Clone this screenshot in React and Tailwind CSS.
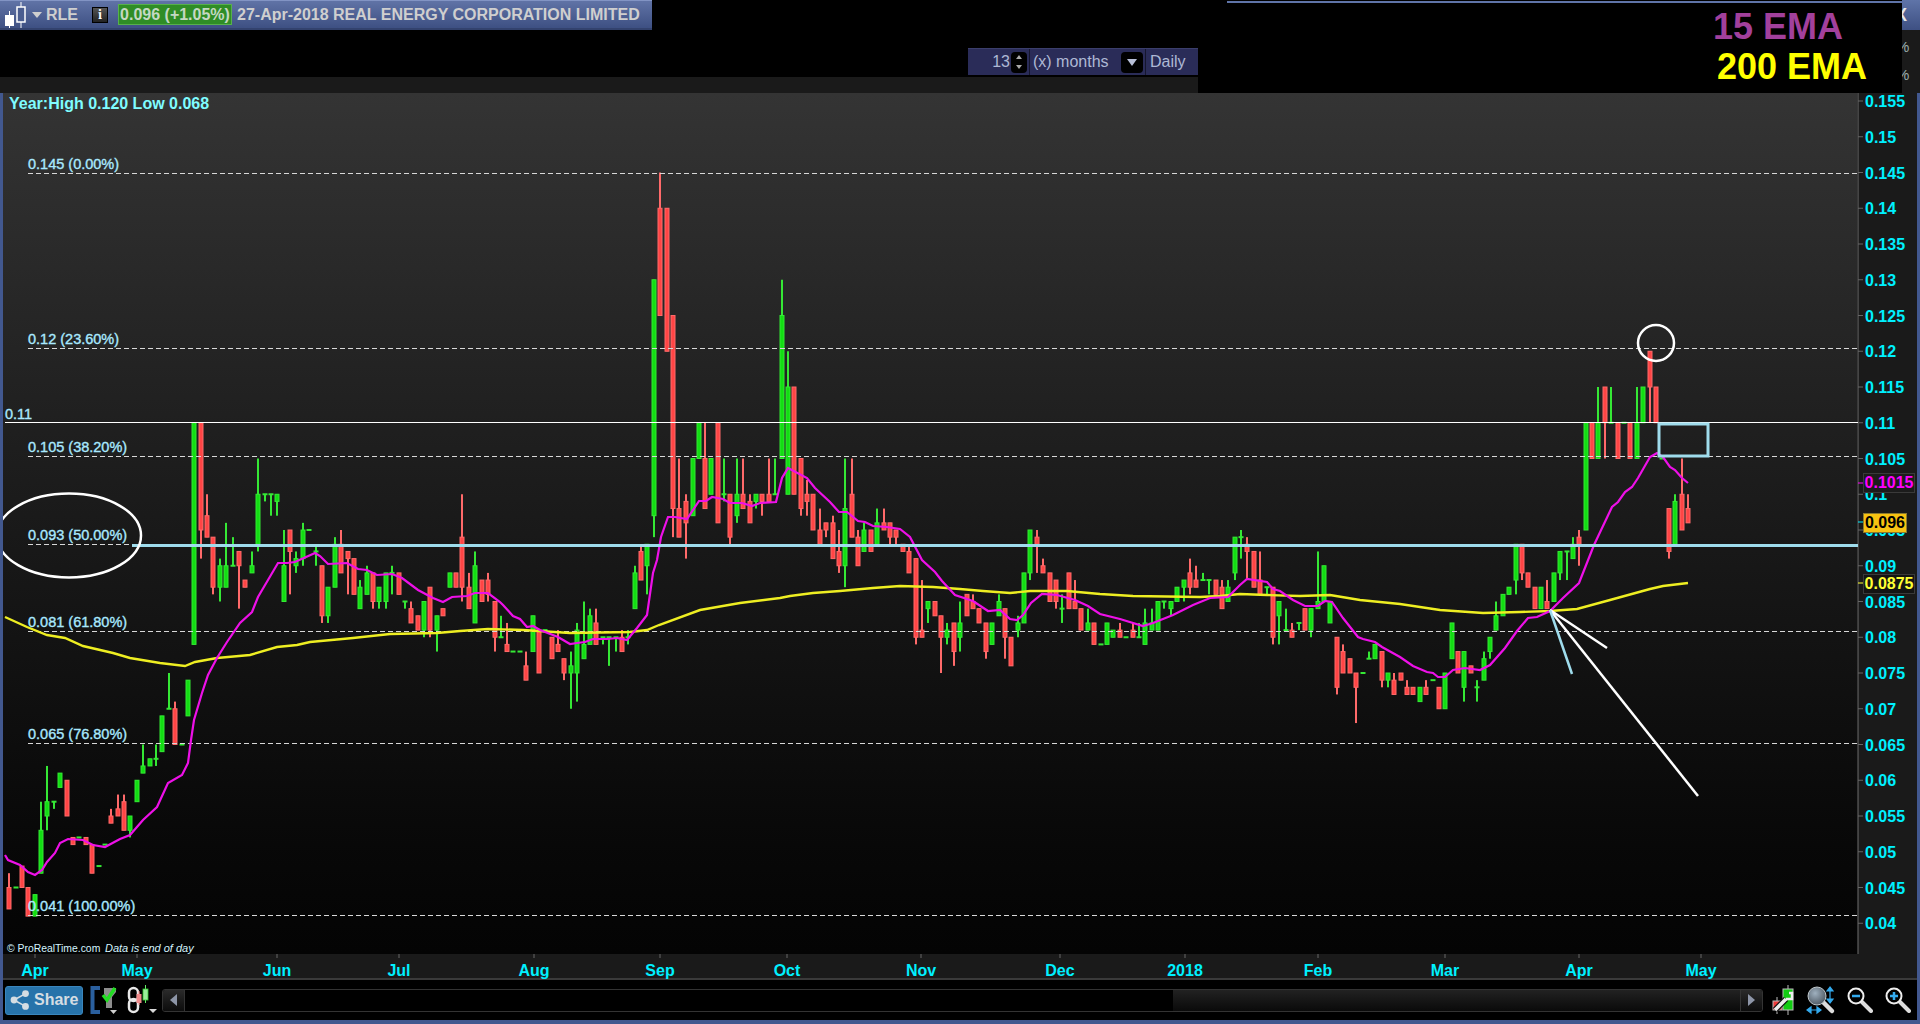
import React from 'react';

// y on the page for a price given in thousandths
const py = (t) => 101 + (155 - t) * 7.15;

// [x, colour, high, bodyTop, bodyBottom, low]
const CANDLES = [
  [9,'r',47,45,42,42],[16,'g',45,45,45,45],[22,'r',48,48,45,45],[28,'r',45,45,41,41],[35,'g',44,44,41,41],
  [41,'g',57,53,47,47],[47,'g',62,57,55,53],[54,'g',57,57,57,56],[60,'g',61,61,59,59],[67,'r',60,60,55,55],
  [73,'r',52,52,51,51],[79,'g',52,52,52,52],[86,'r',52,52,51,51],[92,'r',51,51,47,47],[99,'g',48,48,48,48],
  [105,'g',51,51,51,51],[111,'r',56,55,54,54],[118,'r',58,56,55,55],[124,'r',58,57,53,53],[130,'g',55,55,53,52],
  [137,'g',60,60,57,57],[143,'g',65,62,61,61],[150,'g',63,63,62,62],[156,'g',65,63,63,62],[162,'g',69,69,64,64],
  [169,'g',75,70,70,70],[175,'r',71,70,65,65],[182,'g',65,65,65,65],[188,'g',74,74,69,69],[194,'g',110,110,79,79],
  [201,'r',110,110,95,91],[207,'r',100,97,94,94],[213,'r',94,94,87,86],[220,'g',91,90,87,85],[226,'g',96,90,87,87],
  [233,'g',94,90,90,90],[239,'r',92,92,90,84],[245,'r',88,88,87,87],[252,'g',92,90,89,89],[258,'g',105,100,93,92],
  [265,'g',100,100,100,99],[271,'g',100,100,100,97],[277,'g',100,100,99,97],[284,'g',95,90,85,85],[290,'r',95,95,92,86],
  [296,'g',92,91,90,89],[303,'g',96,95,91,90],[309,'g',95,95,95,95],[316,'g',93,92,92,90],[322,'r',90,90,83,82],
  [328,'g',87,87,83,82],[335,'g',94,93,87,87],[341,'r',95,93,89,89],[348,'r',92,92,91,86],[354,'r',91,91,86,86],
  [360,'g',88,87,84,84],[367,'g',90,89,86,86],[373,'r',89,89,85,84],[379,'g',87,87,85,84],[386,'g',89,89,85,84],
  [392,'g',90,89,89,86],[399,'r',89,89,86,86],[405,'g',85,85,85,84],[411,'r',85,84,82,82],[418,'r',83,83,81,81],
  [424,'g',85,85,81,80],[430,'r',87,87,81,80],[437,'g',83,83,81,78],[443,'r',84,84,83,83],[450,'g',89,89,87,87],
  [456,'r',89,89,87,87],[462,'r',100,94,87,85],[469,'r',89,87,84,84],[475,'g',92,90,82,82],[482,'r',88,88,85,85],
  [488,'r',89,88,86,85],[495,'r',85,85,80,78],[501,'g',83,80,80,80],[507,'r',82,79,78,78],[513,'g',78,78,78,78],
  [520,'g',78,78,78,78],[526,'r',78,76,74,74],[533,'g',83,83,78,78],[539,'r',81,81,75,75],[545,'g',81,81,81,81],
  [552,'r',80,80,77,77],[558,'r',81,79,78,78],[564,'r',77,77,75,74],[571,'g',78,76,75,70],[577,'g',82,81,75,71],
  [584,'g',85,79,77,77],[590,'g',84,83,79,79],[596,'r',84,82,79,79],[603,'g',80,80,80,79],[609,'g',80,80,80,76],
  [616,'g',80,80,80,78],[622,'r',81,80,78,78],[628,'g',81,80,80,79],[635,'g',90,89,84,84],[641,'r',93,92,88,88],
  [647,'g',93,93,90,86],[654,'g',130,130,97,94],[660,'r',145,140,125,125],[667,'r',140,140,120,120],[673,'r',125,125,98,94],
  [679,'r',105,98,94,94],[686,'r',100,99,96,91],[693,'g',105,105,97,97],[699,'g',110,110,105,105],[705,'r',110,105,98,98],
  [711,'g',105,105,100,100],[718,'r',110,110,96,96],[724,'g',105,100,100,99],[730,'r',100,100,94,93],[737,'g',105,100,97,96],
  [743,'r',105,100,98,98],[750,'r',100,99,96,96],[756,'g',100,100,99,98],[762,'r',100,100,99,97],[769,'r',105,100,99,99],
  [775,'g',105,100,100,100],[782,'g',130,125,105,105],[788,'g',120,115,100,100],[794,'r',115,115,100,100],[801,'r',105,105,98,97],
  [807,'r',102,100,99,97],[813,'r',100,100,95,95],[820,'r',98,95,93,93],[826,'r',96,96,95,94],[833,'r',97,96,91,91],
  [839,'r',95,92,90,89],[845,'g',105,98,90,87],[852,'r',105,100,94,94],[858,'r',95,94,90,90],[864,'g',96,95,92,92],
  [871,'r',95,95,92,92],[877,'g',98,96,93,93],[884,'r',98,96,95,95],[890,'r',96,96,94,93],[896,'r',95,95,94,93],
  [903,'r',93,93,92,92],[909,'r',93,92,89,89],[916,'r',91,91,80,79],[922,'r',88,81,80,80],[928,'g',85,85,84,82],
  [935,'r',85,85,83,83],[941,'r',83,83,80,75],[947,'g',82,81,80,79],[954,'r',82,82,78,76],[960,'g',85,82,80,78],
  [967,'r',86,86,83,83],[973,'r',86,85,84,84],[979,'r',84,84,82,82],[986,'r',82,82,78,77],[992,'g',82,82,79,79],
  [999,'g',86,85,83,83],[1005,'r',84,84,80,77],[1011,'r',80,80,76,76],[1018,'g',83,82,81,80],[1024,'g',89,89,82,82],
  [1030,'g',95,95,89,88],[1037,'r',95,94,93,89],[1043,'r',91,90,89,89],[1050,'r',89,89,85,85],[1056,'r',88,88,85,84],
  [1062,'g',86,84,84,82],[1069,'r',89,89,84,84],[1075,'r',88,85,84,84],[1081,'r',84,84,81,81],[1088,'g',84,82,81,81],
  [1094,'r',82,82,79,79],[1101,'g',79,79,79,79],[1107,'g',82,82,79,79],[1113,'g',81,81,80,80],[1120,'r',82,81,80,80],
  [1126,'g',80,80,80,80],[1133,'r',82,81,80,80],[1139,'g',82,80,80,80],[1145,'g',84,82,79,79],[1152,'g',84,82,81,81],
  [1158,'g',85,85,81,81],[1164,'g',85,85,85,84],[1171,'g',85,85,84,83],[1177,'g',87,87,85,85],[1184,'g',88,88,87,85],
  [1190,'r',91,89,87,86],[1196,'r',90,88,87,87],[1203,'g',89,88,88,88],[1209,'g',88,88,88,86],[1216,'r',88,88,86,86],
  [1222,'r',88,87,84,84],[1228,'g',88,87,85,85],[1235,'g',94,94,89,88],[1241,'g',95,94,94,91],[1247,'r',94,93,92,88],
  [1254,'r',92,92,87,87],[1260,'r',92,88,86,86],[1267,'g',87,87,87,86],[1273,'r',87,87,80,79],[1279,'g',85,85,83,79],
  [1286,'g',84,81,81,81],[1292,'r',82,81,80,80],[1299,'g',82,82,82,81],[1305,'r',84,84,81,81],[1311,'g',84,84,81,80],
  [1318,'g',92,85,84,84],[1324,'g',90,90,85,85],[1330,'g',85,85,82,82],[1337,'r',80,80,73,72],[1343,'r',79,78,75,75],
  [1350,'r',77,77,75,75],[1356,'r',75,75,73,68],[1363,'g',75,75,75,75],[1369,'g',78,77,77,77],[1375,'g',79,79,77,77],
  [1382,'r',78,78,74,73],[1388,'g',75,75,74,73],[1394,'r',75,74,72,72],[1401,'r',75,75,74,74],[1407,'r',74,73,72,72],
  [1413,'r',73,73,72,72],[1420,'g',73,73,71,71],[1426,'r',74,73,72,72],[1433,'g',74,74,74,74],[1439,'r',73,73,70,70],
  [1445,'g',75,75,70,70],[1452,'g',82,82,77,77],[1458,'r',78,78,75,75],[1464,'g',78,78,73,71],[1471,'r',76,76,75,75],
  [1477,'g',74,73,73,71],[1484,'g',78,77,74,74],[1490,'g',80,80,78,77],[1496,'g',85,83,81,81],[1503,'g',86,86,83,83],
  [1509,'g',87,87,86,86],[1516,'g',93,93,88,86],[1522,'r',93,93,89,88],[1528,'r',89,89,87,87],[1535,'r',87,87,84,84],
  [1541,'g',87,87,84,84],[1547,'r',88,85,84,84],[1554,'g',89,89,85,85],[1560,'g',92,92,89,88],[1567,'g',92,92,92,88],
  [1573,'g',94,93,91,91],[1579,'r',95,94,93,90],[1586,'g',110,110,95,95],[1592,'r',110,110,105,105],[1598,'g',115,110,105,105],
  [1605,'r',115,115,110,105],[1611,'g',115,110,110,110],[1618,'r',110,110,105,105],[1624,'g',110,110,110,110],[1630,'r',110,110,105,105],
  [1637,'g',115,110,105,105],[1643,'g',115,115,110,110],[1650,'r',120,120,115,110],[1656,'r',115,115,110,110],[1662,'g',105,105,105,105],
  [1669,'r',98,98,92,91],[1675,'g',100,99,93,93],[1682,'r',105,100,95,95],[1688,'r',100,98,96,96],
];

const EMA15 = '5,855 8,860 20,865 28,872 35,875 42,870 47,862 55,853 60,843 68,839 83,840 93,845 105,847 120,839 130,835 143,820 157,807 168,783 182,775 188,763 191,740 194,720 202,693 208,675 217,658 227,642 240,623 252,612 258,597 278,563 287,563 295,562 315,553 320,556 328,564 347,563 358,569 367,570 377,575 392,574 402,578 418,590 433,598 443,602 452,597 467,596 475,593 488,593 500,602 503,605 513,616 520,619 527,627 533,626 540,630 558,637 570,644 577,643 585,642 593,639 607,639 617,638 627,640 637,628 647,615 653,573 657,560 661,537 668,517 675,517 687,519 699,501 706,501 712,497 723,499 730,503 742,503 752,506 760,503 776,502 782,478 788,468 807,478 815,488 830,502 839,512 847,512 858,521 865,522 873,526 887,527 900,529 910,537 922,560 935,572 942,581 955,595 973,601 988,611 1000,610 1010,619 1017,620 1023,615 1031,603 1042,594 1057,595 1075,600 1088,606 1100,614 1120,619 1143,626 1153,623 1173,615 1193,605 1210,598 1228,597 1240,585 1247,579 1267,582 1273,589 1280,591 1293,600 1305,606 1318,606 1325,601 1332,602 1343,618 1358,637 1363,639 1375,642 1382,647 1400,657 1413,666 1427,672 1433,673 1438,677 1445,677 1453,670 1465,668 1480,670 1490,665 1505,648 1517,631 1528,618 1537,617 1550,611 1563,598 1579,583 1594,545 1612,507 1618,502 1625,492 1632,487 1638,478 1650,457 1657,453 1663,457 1670,467 1675,470 1682,478 1688,483';

const EMA200 = '5,617 27,627 47,635 65,638 83,646 113,653 130,658 160,663 185,666 195,662 217,658 250,655 277,647 297,645 310,642 353,638 390,634 437,633 460,631 488,629 523,630 570,633 630,632 647,630 659,625 700,610 740,603 780,598 790,596 813,593 840,591 873,588 900,586 933,587 960,589 983,591 1010,593 1030,591 1067,591 1100,594 1133,596 1200,597 1220,596 1240,594 1267,595 1300,596 1330,595 1360,600 1400,604 1440,610 1483,613 1520,612 1550,611 1577,609 1610,600 1650,589 1663,586 1688,583';

const FIB_LEVELS = [
  { y: 173, label: '0.145 (0.00%)' },
  { y: 348, label: '0.12 (23.60%)' },
  { y: 456, label: '0.105 (38.20%)' },
  { y: 544, label: '0.093 (50.00%)' },
  { y: 631, label: '0.081 (61.80%)' },
  { y: 743, label: '0.065 (76.80%)' },
  { y: 915, label: '0.041 (100.00%)' },
];

const PRICE_TICKS = Array.from({ length: 24 }, (_, i) => 155 - i * 5);

const MONTHS = [
  ['Apr', 35], ['May', 137], ['Jun', 277], ['Jul', 399], ['Aug', 534], ['Sep', 660], ['Oct', 787],
  ['Nov', 921], ['Dec', 1060], ['2018', 1185], ['Feb', 1318], ['Mar', 1445], ['Apr', 1579], ['May', 1701],
];

function Candle({ x, c, hi, top, bot, lo }) {
  const color = c === 'r' ? '#ff6a6a' : '#35e835';
  const fill = c === 'r' ? '#ff4545' : '#12de12';
  const h = py(bot) - py(top);
  return (
    <g>
      <rect x={x - 1} y={py(hi)} width="2" height={py(lo) - py(hi)} fill={color} />
      {h < 2
        ? <rect x={x - 2.5} y={py(top) - 1} width="5" height="2" fill={color} />
        : <rect x={x - 2} y={py(top)} width="4" height={h} fill={fill} stroke={color} strokeWidth="1" />}
    </g>
  );
}

function ChartCanvas() {
  return (
    <svg className="absolute inset-0" width="1855" height="861" viewBox="3 93 1855 861">
      {CANDLES.map(([x, c, hi, top, bot, lo]) => (
        <Candle key={x} x={x} c={c} hi={hi} top={top} bot={bot} lo={lo} />
      ))}

      {/* fibonacci levels */}
      {FIB_LEVELS.map((f) => (
        <g key={f.label}>
          <line x1="28" x2="1858" y1={f.y + 0.5} y2={f.y + 0.5} stroke="#d8d8d8" strokeDasharray="5 3" />
          <text x="28" y={f.y - 4} fontSize="14.5" fill="#a9e9ff" stroke="#a9e9ff" strokeWidth="0.35">{f.label}</text>
        </g>
      ))}

      <polyline points={EMA200} fill="none" stroke="#eeee22" strokeWidth="2.4" />
      <polyline points={EMA15} fill="none" stroke="#ee10e8" strokeWidth="2.2" />

      {/* hand drawn annotations */}
      <line x1="5" x2="1858" y1="422.5" y2="422.5" stroke="#ffffff" />
      <text x="5" y="419" fontSize="14.5" fill="#a9e9ff" stroke="#a9e9ff" strokeWidth="0.35">0.11</text>
      <line x1="132" x2="1858" y1="545.5" y2="545.5" stroke="#9fdcec" strokeWidth="3" />
      <ellipse cx="69" cy="535.5" rx="72" ry="42" fill="none" stroke="#ffffff" strokeWidth="2.5" />
      <circle cx="1656" cy="343" r="18" fill="none" stroke="#ffffff" strokeWidth="2.5" />
      <rect x="1659" y="424" width="49" height="32" fill="none" stroke="#9fdcec" strokeWidth="3" />
      <line x1="1550" y1="610" x2="1607" y2="648" stroke="#ffffff" strokeWidth="2.5" />
      <line x1="1550" y1="610" x2="1698" y2="796" stroke="#ffffff" strokeWidth="2.5" />
      <line x1="1550" y1="610" x2="1572" y2="674" stroke="#9fdcec" strokeWidth="2.5" />

      <text x="9" y="109" fontSize="16" fontWeight="700" fill="#7ffcff">Year:High 0.120 Low 0.068</text>
      <text x="7" y="952" fontSize="10.4" fill="#d5f4ff">© ProRealTime.com</text>
      <text x="105" y="952" fontSize="11" fontStyle="italic" fill="#d5f4ff">Data is end of day</text>
    </svg>
  );
}

function PriceAxis() {
  return (
    <div className="relative w-[59px] bg-[#1a1a1a] border-l border-[#444]">
      <svg className="absolute top-0 left-[-1px]" width="59" height="861" viewBox="1858 93 59 861">
        {PRICE_TICKS.map((t) => (
          <g key={t}>
            <line x1="1858" x2="1863" y1={py(t)} y2={py(t)} stroke="#666" />
            <text x="1865" y={py(t) + 6} fontSize="16" fontWeight="700" fill="#00f0ff">
              {String(t / 1000)}
            </text>
          </g>
        ))}
        <line x1="1858" x2="1863" y1="483" y2="483" stroke="#ff00ff" />
        <line x1="1858" x2="1863" y1="522" y2="522" stroke="#00f0ff" />
        <line x1="1858" x2="1863" y1="583" y2="583" stroke="#ffff33" />
      </svg>
      <div className="absolute top-[380px] left-[4px] w-[52px] h-[20px] bg-[#1c1c1c] border border-[#3a3a3a] text-[16px] leading-[18px] font-bold text-[#ff00ff] text-center">0.1015</div>
      <div className="absolute top-[420px] left-[4px] w-[44px] h-[20px] bg-[#f7c211] border border-[#8a7a30] text-[16px] leading-[18px] font-bold text-black text-center">0.096</div>
      <div className="absolute top-[481px] left-[4px] w-[52px] h-[20px] bg-[#141414] border border-[#3a3a3a] text-[16px] leading-[18px] font-bold text-[#ffff33] text-center">0.0875</div>
    </div>
  );
}

function TimeAxis() {
  return (
    <div className="relative h-[26px] bg-[#1a1a1a] border-b-2 border-[#3a3a3a]">
      <svg className="absolute inset-0" width="1914" height="26" viewBox="3 954 1914 26">
        {MONTHS.map(([m, x]) => (
          <g key={x}>
            <line x1={x} x2={x} y1="954" y2="958" stroke="#666" />
            <text x={x} y="976" fontSize="16" fontWeight="700" fill="#00f0ff" textAnchor="middle">{m}</text>
          </g>
        ))}
      </svg>
    </div>
  );
}

function CandleLogo() {
  return (
    <svg width="24" height="26" viewBox="0 0 24 26">
      <rect x="1" y="13" width="9" height="11" fill="#ffffff" />
      <line x1="5.5" x2="5.5" y1="9" y2="26" stroke="#ffffff" />
      <rect x="13" y="5" width="8" height="15" fill="#4a5d90" stroke="#ffffff" strokeWidth="1.5" />
      <line x1="17" x2="17" y1="0" y2="5" stroke="#ffffff" />
      <line x1="17" x2="17" y1="20" y2="26" stroke="#ffffff" />
    </svg>
  );
}

function TitleBar() {
  return (
    <div className="flex items-center w-[652px] h-[30px] pl-1 bg-gradient-to-b from-[#6073a6] to-[#3e5083] border-t border-b-2 border-t-[#8294c4] border-b-[#33426e] text-[16px] font-bold text-[#cfcfcf]">
      <CandleLogo />
      <span className="ml-[4px] w-0 h-0 border-x-[5px] border-t-[6px] border-x-transparent border-t-[#cfcfcf]" />
      <span className="ml-[4px]">RLE</span>
      <span className="ml-[14px] w-[16px] h-[16px] flex items-center justify-center bg-gradient-to-b from-[#555] to-[#222] border border-black text-white text-[13px] font-serif">i</span>
      <span className="ml-[10px] w-[114px] h-[21px] flex items-center justify-center bg-[#2f8d26] border border-[#57b04c] text-[#c4d8c2]">0.096 (+1.05%)</span>
      <span className="ml-[5px] whitespace-nowrap">27-Apr-2018 REAL ENERGY CORPORATION LIMITED</span>
    </div>
  );
}

function RangeControls() {
  return (
    <div className="flex items-center w-[230px] h-[27px] bg-[#2a2c58] border-t border-[#3b3e6c] text-[16px] text-[#aeb8d4]">
      <span className="ml-[24px] w-[18px] text-right">13</span>
      <span className="ml-[1px] w-[16px] h-[21px] flex flex-col items-center justify-around bg-black rounded-sm">
        <span className="w-0 h-0 border-x-[3px] border-b-[4px] border-x-transparent border-b-[#aaa]" />
        <span className="w-0 h-0 border-x-[3px] border-t-[4px] border-x-transparent border-t-[#aaa]" />
      </span>
      <span className="ml-[2px] w-px h-full bg-[#15162e]" />
      <span className="ml-[3px] w-[84px] whitespace-nowrap">(x) months</span>
      <span className="ml-[4px] w-[22px] h-[21px] flex items-center justify-center bg-black rounded-sm">
        <span className="w-0 h-0 border-x-[5px] border-t-[7px] border-x-transparent border-t-[#b8c0d8]" />
      </span>
      <span className="ml-[2px] w-px h-full bg-[#15162e]" />
      <span className="ml-[4px]">Daily</span>
    </div>
  );
}

function ShareButton() {
  return (
    <div className="flex items-center gap-[4px] w-[78px] h-[29px] pl-[4px] rounded-[3px] bg-[#2773aa] border border-[#3a86bd] text-[16px] font-bold text-[#d5dde3]">
      <svg width="20" height="20" viewBox="0 0 20 20" fill="#d5dde3">
        <circle cx="4" cy="10" r="3.4" />
        <circle cx="15.5" cy="3.6" r="3.4" />
        <circle cx="15.5" cy="16.4" r="3.4" />
        <path d="M4 10 15.5 3.6M4 10l11.5 6.4" stroke="#d5dde3" strokeWidth="1.6" />
      </svg>
      Share
    </div>
  );
}

function BracketCheckIcon() {
  return (
    <svg width="28" height="28" viewBox="0 0 28 28">
      <path d="M10 2H2.500V26H10" fill="none" stroke="#2a5f9e" strokeWidth="4" />
      <path d="M14 2h12v4l-4 5v11h-6V11l-2-3z" fill="#8d8d8d" />
      <path d="M20 24h7l-3.500 4z" fill="#cfcfcf" />
      <path d="M13 9l4 5 8-12" fill="none" stroke="#22dd22" strokeWidth="3.500" />
    </svg>
  );
}

function ChainCandleIcon() {
  return (
    <svg width="30" height="30" viewBox="0 0 30 30">
      <rect x="2" y="3" width="9" height="13" rx="4.500" fill="none" stroke="#e8e8e8" strokeWidth="2.500" />
      <rect x="2" y="14" width="9" height="13" rx="4.500" fill="none" stroke="#e8e8e8" strokeWidth="2.500" />
      <line x1="12" x2="12" y1="6" y2="20" stroke="#ff8a8a" />
      <rect x="9.500" y="9" width="5" height="9" fill="#f08a8a" />
      <line x1="18.500" x2="18.500" y1="0" y2="18" stroke="#66ee66" />
      <rect x="16" y="4" width="5" height="11" fill="#9cf09c" stroke="#33cc33" strokeWidth="0.800" />
      <path d="M22 24h8l-4 4z" fill="#d8d8d8" />
    </svg>
  );
}

function WrenchCandleIcon() {
  return (
    <svg width="24" height="30" viewBox="0 0 24 30">
      <line x1="16" x2="16" y1="0" y2="30" stroke="#bbbbbb" />
      <rect x="11" y="4" width="10" height="21" fill="#12cc12" stroke="#bbbbbb" />
      <line x1="5" x2="5" y1="12" y2="29" stroke="#bbbbbb" />
      <rect x="1" y="16" width="9" height="9" fill="#ee3a3a" stroke="#bbbbbb" />
      <path d="M3 25 14 14" stroke="#111" strokeWidth="6" />
      <path d="M3 25 14 14" stroke="#eeeeee" strokeWidth="3.500" />
      <path d="M14 14h6V8h-3" fill="none" stroke="#eeeeee" strokeWidth="2.500" />
    </svg>
  );
}

function FitZoomIcon() {
  return (
    <svg width="30" height="30" viewBox="0 0 30 30">
      <defs>
        <radialGradient id="lens" cx="40%" cy="35%" r="70%">
          <stop offset="0%" stopColor="#9fb0bf" />
          <stop offset="100%" stopColor="#4b5660" />
        </radialGradient>
      </defs>
      <line x1="17" y1="17" x2="26" y2="26" stroke="#dddddd" strokeWidth="4.500" strokeLinecap="round" />
      <circle cx="11" cy="11" r="9" fill="url(#lens)" stroke="#c0c8cc" strokeWidth="1" />
      <path d="M24 3v14M24 2l-3 4h6zM24 18l-3-4h6z" fill="#33aaee" stroke="#33aaee" strokeWidth="1.200" />
      <path d="M2 25h12M1 25l4-3v6zM15 25l-4-3v6z" fill="#33aaee" stroke="#33aaee" strokeWidth="1.200" />
    </svg>
  );
}

function ZoomIcon({ plus }) {
  return (
    <svg width="26" height="26" viewBox="0 0 26 26">
      <line x1="14" y1="14" x2="24" y2="24" stroke="#dddddd" strokeWidth="4" strokeLinecap="round" />
      <circle cx="9" cy="9" r="7.500" fill="#000" stroke="#eeeeee" strokeWidth="2" />
      <path d={plus ? 'M5 9h8M9 5v8' : 'M5 9h8'} stroke="#33aaee" strokeWidth="2.500" />
    </svg>
  );
}

function Scrollbar() {
  return (
    <div className="flex w-[1601px] h-[23px] border border-[#333] rounded-[3px] overflow-hidden">
      <div className="flex items-center justify-center w-[22px] bg-gradient-to-b from-[#2a2a2a] to-[#0c0c0c] border-r border-[#333]">
        <span className="w-0 h-0 border-y-[6px] border-r-[7px] border-y-transparent border-r-[#8e96a8]" />
      </div>
      <div className="w-[988px] bg-black" />
      <div className="flex-1 bg-gradient-to-b from-[#222] to-[#0a0a0a]" />
      <div className="flex items-center justify-center w-[22px] bg-gradient-to-b from-[#2a2a2a] to-[#0c0c0c] border-l border-[#333]">
        <span className="w-0 h-0 border-y-[6px] border-l-[7px] border-y-transparent border-l-[#8e96a8]" />
      </div>
    </div>
  );
}

function BottomBar() {
  return (
    <div className="flex items-center h-[40px] bg-black pl-[2px]">
      <ShareButton />
      <div className="ml-[7px]"><BracketCheckIcon /></div>
      <div className="ml-[9px]"><ChainCandleIcon /></div>
      <div className="ml-[5px]"><Scrollbar /></div>
      <div className="ml-[9px]"><WrenchCandleIcon /></div>
      <div className="ml-[10px]"><FitZoomIcon /></div>
      <div className="ml-[11px]"><ZoomIcon /></div>
      <div className="ml-[12px]"><ZoomIcon plus /></div>
    </div>
  );
}

export default function App() {
  return (
    <div className="w-[1920px] h-[1024px] flex flex-col bg-black overflow-hidden font-['Liberation_Sans',sans-serif]">
      {/* header */}
      <div className="flex h-[93px]">
        <div className="w-[1198px] flex flex-col">
          <TitleBar />
          <div className="flex justify-end pt-[18px] h-[47px] bg-black">
            <RangeControls />
          </div>
          <div className="flex-1 bg-[#1a1a1a]" />
        </div>
        <div className="relative flex-1 flex flex-col items-start gap-[4px] pt-[9px] pl-[515px] bg-black">
          <div className="absolute top-px left-[29px] right-0 h-[2px] bg-[#5f74a8]" />
          <span className="text-[36px] leading-[36px] font-bold text-[#a2409c]">15 EMA</span>
          <span className="ml-[4px] text-[36px] leading-[36px] font-bold text-[#ffff00]">200 EMA</span>
        </div>
        <div className="w-[18px] flex flex-col overflow-hidden">
          <div className="h-[30px] pl-[1px] bg-gradient-to-b from-[#5f74a8] to-[#3e5083] text-[#e8e8e8] text-[18px] font-bold leading-[30px] -indent-[8px]">X</div>
          <div className="flex-1 bg-[#1a1a1a] text-[#9aa] text-[15px] pt-[3px] leading-[28px] -indent-[6px]">
            <div>%</div>
            <div>%</div>
          </div>
        </div>
      </div>

      {/* chart */}
      <div className="flex h-[861px]">
        <div className="w-[3px] bg-[#42588f]" />
        <div className="relative flex-1 bg-gradient-to-b from-[#343434] to-[#040404] border-r border-[#3a3a3a]">
          <ChartCanvas />
        </div>
        <PriceAxis />
        <div className="w-[3px] bg-[#42588f]" />
      </div>

      {/* time axis and toolbar */}
      <div className="flex flex-col flex-1">
        <div className="flex-1 flex flex-col border-x-[3px] border-[#42588f]">
          <TimeAxis />
          <BottomBar />
        </div>
        <div className="h-[4px] bg-[#42588f]" />
      </div>
    </div>
  );
}
